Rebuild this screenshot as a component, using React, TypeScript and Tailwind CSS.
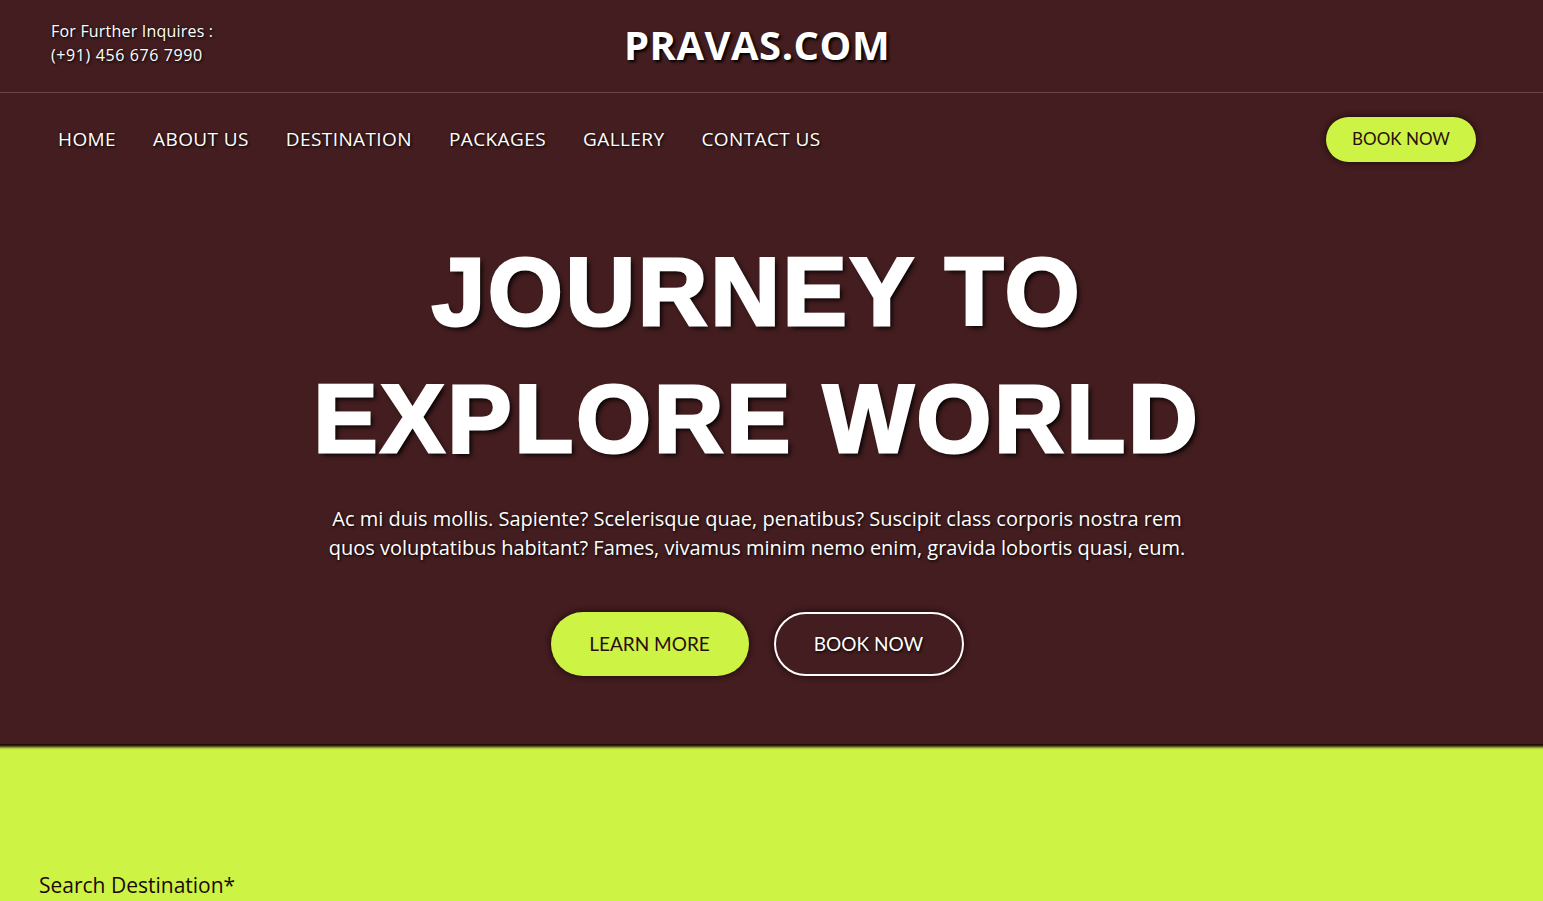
import React from 'react';

const navLinks = ['HOME', 'ABOUT US', 'DESTINATION', 'PACKAGES', 'GALLERY', 'CONTACT US'];

export default function App() {
  return (
    <div className="min-h-screen bg-[#431d1f] font-['Open_Sans',sans-serif] text-white">
      <header className="relative flex h-[93px] items-start border-b border-[#6a4644] px-[51px] pt-[19px]">
        <div className="text-[16px] font-medium leading-[24px] tracking-[0.2px] [text-shadow:1px_1px_3px_#000]">
          <p>For Further Inquires :</p>
          <p className="tracking-[0.6px]">(+91) 456 676 7990</p>
        </div>
        <h1 className="absolute left-[757px] top-[15px] -translate-x-1/2 text-[40px] font-bold tracking-[0.5px] [text-shadow:2px_2px_3px_#000]">
          PRAVAS.COM
        </h1>
      </header>

      <nav className="flex h-[92px] items-center justify-between pl-[58px] pr-[67px]">
        <ul className="flex gap-[37px] text-[19px] font-medium tracking-[0.4px] [text-shadow:1px_1px_3px_#000]">
          {navLinks.map((link) => (
            <li key={link}>
              <a href="#">{link}</a>
            </li>
          ))}
        </ul>
        <button className="h-[45px] w-[150px] rounded-full bg-[#cdf345] font-['Lato',sans-serif] text-[17px] text-[#2a0e10] shadow-[0_0_6px_#1a0408]">
          BOOK NOW
        </button>
      </nav>

      <section className="flex flex-col items-center pb-[68px] pr-[29px] pt-[43px] text-center">
        <h2 className="font-['Liberation_Sans',sans-serif] text-[96px] font-bold uppercase leading-[127px] tracking-[3px] [-webkit-text-stroke:3px_#fff] [text-shadow:3px_3px_5px_#000]">
          Journey to
          <br />
          Explore World
        </h2>
        <p className="mt-[22px] w-[880px] text-[20px] leading-[29px] [text-shadow:1px_1px_3px_#000]">
          Ac mi duis mollis. Sapiente? Scelerisque quae, penatibus? Suscipit class corporis nostra rem quos
          voluptatibus habitant? Fames, vivamus minim nemo enim, gravida lobortis quasi, eum.
        </p>
        <div className="mt-[50px] flex gap-[25px] font-['Lato',sans-serif] text-[19px]">
          <button className="h-[64px] w-[198px] rounded-full bg-[#cdf345] text-[#2a0e10] shadow-[0_0_6px_#1a0408]">
            LEARN MORE
          </button>
          <button className="h-[64px] w-[190px] rounded-full border-2 border-white text-white shadow-[0_0_6px_#1a0408] [text-shadow:1px_1px_3px_#000]">
            BOOK NOW
          </button>
        </div>
      </section>

      <section className="min-h-[160px] bg-[#cdf345] px-[39px] pt-[126px] text-[#1a0a0a] shadow-[inset_0_6px_3px_-3px_#1a0408]">
        <label className="text-[21px]">Search Destination*</label>
      </section>
    </div>
  );
}
